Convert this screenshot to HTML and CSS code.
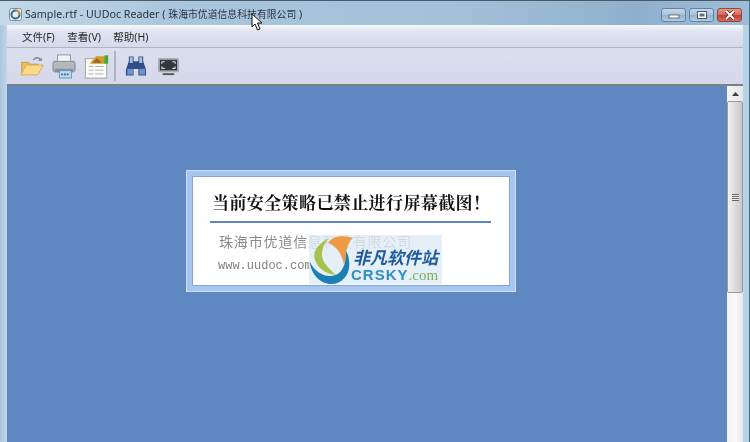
FILE: index.html
```html
<!DOCTYPE html>
<html lang="zh-CN">

<head>
    <meta charset="UTF-8">
    <title>Sample.rtf - UUDoc Reader</title>
    <link rel="stylesheet" href="styles.css">
</head>

<body>
    <div class="window">
        <header class="titlebar">
            <svg class="app-icon" width="13" height="13" viewBox="0 0 13 13">
                <rect x="0.5" y="0.5" width="12" height="12" rx="2" fill="#e8eef2" stroke="#7d8d99" />
                <circle cx="6.5" cy="6.5" r="4" fill="none" stroke="#2f6f8f" stroke-width="2" />
                <path d="M6.5 2.5a4 4 0 0 1 4 4" fill="none" stroke="#d9913a" stroke-width="1.6" />
            </svg>
            <span class="title">Sample.rtf - UUDoc Reader ( <span class="title-cn">珠海市优道信息科技有限公司</span> )</span>
            <div class="caption-buttons">
                <div class="caption-btn">
                    <svg width="12" height="8" viewBox="0 0 12 8">
                        <rect x="1" y="4" width="10" height="3" fill="#fff" stroke="#46586e" stroke-width="0.8" />
                    </svg>
                </div>
                <div class="caption-btn">
                    <svg width="12" height="10" viewBox="0 0 12 10">
                        <rect x="1.5" y="1.5" width="9" height="7" fill="#fff" stroke="#46586e" />
                        <rect x="3.5" y="3.5" width="5" height="3" fill="#5d7390" />
                    </svg>
                </div>
                <div class="caption-btn close">
                    <svg width="14" height="10" viewBox="0 0 14 10">
                        <path d="M3 1l8 8M11 1l-8 8" stroke="#5c2118" stroke-width="3.4" />
                        <path d="M3 1l8 8M11 1l-8 8" stroke="#fff" stroke-width="2" />
                    </svg>
                </div>
            </div>
        </header>

        <div class="client">
            <nav class="menubar">
                <span class="menu-item">文件(F)</span>
                <span class="menu-item">查看(V)</span>
                <span class="menu-item">帮助(H)</span>
            </nav>

            <div class="toolbar">
                <!-- open -->
                <svg class="tool" width="25" height="24" viewBox="0 0 28 26">
                    <path d="M3 22V9h8l2 2h8v3H9z" fill="#e9bf5c" stroke="#c69a3e" />
                    <path d="M2 23L8 12h19l-6 11z" fill="#fbd98a" stroke="#d9a94a" />
                    <path d="M16 6c3-3 6-3 8 0" fill="none" stroke="#7d8a96" stroke-width="1.6" />
                    <path d="M25.500 3.500v4h-4z" fill="#7d8a96" />
                </svg>
                <!-- print -->
                <svg class="tool" width="24" height="26" viewBox="0 0 26 28">
                    <rect x="6" y="2" width="14" height="9" fill="#f2f2f2" stroke="#8d9398" />
                    <rect x="1" y="9" width="24" height="11" rx="2" fill="#b3b8bd" stroke="#80868c" />
                    <rect x="3" y="17" width="20" height="4" fill="#8b9197" />
                    <rect x="8" y="19" width="13" height="8" fill="#bcdcf2" stroke="#5f94bd" />
                    <path d="M10 23h9" stroke="#34688f" stroke-width="2" stroke-dasharray="2 1" />
                </svg>
                <!-- properties -->
                <svg class="tool tool-props" width="26" height="27" viewBox="0 0 28 28">
                    <rect x="1.500" y="5.500" width="23" height="21" fill="#fbfbf7" stroke="#9aa0a0" />
                    <path d="M5 14h5M12 14h9M5 18h5M12 18h9M5 22h5M12 22h9" stroke="#a7adb0" />
                    <path d="M6 11l7-8h9l1 8z" fill="#d69a2d" />
                    <path d="M9 10l5-5 5 5" fill="#8a6a25" />
                    <rect x="22" y="2" width="4" height="9" fill="#3faa3a" />
                </svg>
                <div class="tool-sep"></div>
                <!-- find -->
                <svg class="tool tool-find" width="24" height="24" viewBox="0 0 25 24">
                    <path d="M5 2h5v5h5V2h5v5l3 9v6h-8v-7h-5v7H2v-6l3-9z" fill="#2e4f86" />
                    <path d="M6 3h3v6H6zM16 3h3v6h-3z" fill="#a9c2e2" />
                    <rect x="3.500" y="15" width="6" height="6" fill="#6f93c6" />
                    <rect x="16" y="15" width="6" height="6" fill="#6f93c6" />
                </svg>
                <!-- full screen -->
                <svg class="tool" width="23" height="21" viewBox="0 0 24 22">
                    <rect x="1" y="2" width="22" height="15" rx="1.500" fill="#a9adb1" />
                    <rect x="3" y="4" width="18" height="11" fill="#33383e" />
                    <path d="M5 6h3M5 6v2M19 6h-3M19 6v2M5 13h3M5 13v-2M19 13h-3M19 13v-2" stroke="#d8dde2" stroke-width="1.200" fill="none" />
                    <rect x="6" y="18" width="12" height="2" fill="#55595e" />
                </svg>
            </div>

            <div class="doc-area">
                <main class="doc-view">
                    <div class="notice">
                        <div class="notice-inner">
                            <h1 class="notice-title">当前安全策略已禁止进行屏幕截图！</h1>
                            <p class="company">珠海市优道信息科技有限公司</p>
                            <p class="site">www.uudoc.com</p>
                            <div class="watermark">
                                <svg class="watermark-logo" width="56" height="49" viewBox="0 0 56 49">
                                    <path d="M1 27C2 40 12 49 22 49C34 49 42 38 40 26C40 20 37 15 34 12C37 20 38 28 32 36C25 45 8 42 1 27z" fill="#1b7fb4" />
                                    <path d="M20 3C8 9 3 18 6 25C9 34 18 39 27 40C19 33 12 26 13 18C14 11 16 7 20 3z" fill="#a6c24a" />
                                    <path d="M44 3C36 0 24 0 19 8C26 10 33 18 35 30C38 20 36 10 44 3z" fill="#ee9a45" />
                                </svg>
                                <div class="watermark-text">
                                    <span class="watermark-cn">非凡软件站</span>
                                    <span class="watermark-en">CRSKY<small>.com</small></span>
                                </div>
                            </div>
                        </div>
                    </div>
                </main>
                <aside class="scrollbar">
                    <div class="scroll-btn">
                        <svg width="7" height="4" viewBox="0 0 7 4"><path d="M0 4l3.500-4L7 4z" fill="#3b3f45" /></svg>
                    </div>
                    <div class="scroll-thumb"><span class="grip"></span></div>
                    <div class="scroll-track"></div>
                </aside>
            </div>
        </div>
    </div>

    <svg class="cursor" width="13" height="18" viewBox="0 0 13 18">
        <path d="M1 1v13l3-3 2.500 6 2.500-1-2.500-6H11z" fill="#fff" stroke="#111" stroke-width="1" />
    </svg>
</body>

</html>
```

FILE: styles.css
```css
* {
    box-sizing: border-box;
    padding: 0;
    margin: 0;
}

html,
body {
    width: 750px;
    height: 442px;
    overflow: hidden;
}

body {
    position: relative;
    font-family: "Noto Sans", "Noto Sans CJK SC", sans-serif;
    background: #9fbcd6;
}

.window {
    display: flex;
    flex-direction: column;
    height: 442px;
    padding: 0 6px 0 7px;
    border-top: 1px solid #4a5a66;
    border-right: 1px solid #3f6f8c;
    background: linear-gradient(90deg, #a9c6de 0, #c2d6e8 7px, #c2d6e8 98%, #b5cfe4 100%);
    filter: blur(0.35px);
}

.titlebar {
    display: flex;
    align-items: center;
    height: 24px;
    margin: 0 -6px 0 -7px;
    padding: 2px 7px 0 9px;
    background: linear-gradient(90deg, #c3d8e8 0, #a9c5dc 25%, #a5c1d9 60%, #8fb0cd 85%, #9fbdd6 100%);
}

.app-icon {
    flex: none;
}

.title {
    margin-left: 3px;
    font-size: 10.7px;
    color: #2c3440;
    white-space: nowrap;
}

.title-cn {
    font-size: 9.85px;
}

.caption-buttons {
    display: flex;
    gap: 3px;
    margin-left: auto;
    margin-top: 1px;
}

.caption-btn {
    display: flex;
    align-items: center;
    justify-content: center;
    width: 25px;
    height: 14px;
    border: 1px solid #66829e;
    border-radius: 3px;
    background: linear-gradient(#c3d7e8 0, #a5c2da 50%, #90b0cc 51%, #b4cde2 100%);
}

.caption-btn.close {
    border-color: #8c4a40;
    background: linear-gradient(#e49a8c 0, #d3685a 50%, #bd4030 51%, #d86a58 100%);
}

.client {
    display: flex;
    flex-direction: column;
    flex: 1;
    min-height: 0;
}

.menubar {
    display: flex;
    align-items: center;
    gap: 12.5px;
    height: 23px;
    padding-left: 15px;
    border-bottom: 1px solid #b0b4c0;
    background: linear-gradient(#f7f8fc 0, #e0e3f0 30%, #d5d9ea 100%);
    font-size: 10.5px;
    color: #23272e;
}

.toolbar {
    display: flex;
    align-items: center;
    height: 38px;
    padding-left: 12px;
    border-bottom: 2px solid #7e8085;
    background: linear-gradient(#dcdfee 0, #d4d8e9 100%);
}

.tool {
    flex: none;
    margin-right: 8px;
}

.tool-props {
    margin-right: 4px;
}

.tool-find {
    margin-right: 9px;
}

.tool-sep {
    width: 2px;
    height: 30px;
    margin-right: 8px;
    background: #b0b3bd;
}

.doc-area {
    display: flex;
    flex: 1;
    min-height: 0;
}

.doc-view {
    flex: 1;
    padding: 84px 0 0 179px;
    background: #5f88c2;
}

.notice {
    width: 330px;
    height: 122px;
    padding: 5px;
    border: 1px solid #cfe0f6;
    background: #a7c6ef;
}

.notice-inner {
    position: relative;
    height: 110px;
    padding: 12px 18px 0 17px;
    border: 1px solid #7ea6da;
    background: #fff;
    font-family: "Noto Sans CJK SC", sans-serif;
}

.notice-title {
    height: 34px;
    padding-left: 2px;
    border-bottom: 2px solid #5a86c2;
    font-family: "Noto Serif CJK SC", "Noto Sans CJK SC", serif;
    font-size: 17px;
    line-height: 26px;
    font-weight: 700;
    letter-spacing: 0.4px;
    color: #111;
    white-space: nowrap;
}

.company {
    margin: 10px 0 0 9px;
    font-size: 14px;
    line-height: 16px;
    letter-spacing: 0.85px;
    color: #8a8a8a;
    white-space: nowrap;
}

.site {
    margin: 7px 0 0 8px;
    font-family: "Liberation Mono", monospace;
    font-size: 12px;
    line-height: 20px;
    color: #808080;
}

.watermark {
    position: absolute;
    left: 116px;
    top: 58px;
    display: flex;
    width: 133px;
    height: 49px;
    background: rgba(222, 236, 246, 0.82);
}

.watermark-logo {
    flex: none;
}

.watermark-text {
    display: flex;
    flex-direction: column;
    margin-left: -12px;
    padding-top: 13px;
    white-space: nowrap;
}

.watermark-cn {
    font-size: 17px;
    line-height: 17px;
    font-weight: 700;
    font-style: italic;
    color: #1f5a9c;
}

.watermark-en {
    margin: 3px 0 0 -2px;
    font-family: "Liberation Sans", sans-serif;
    font-size: 15px;
    line-height: 14px;
    font-weight: 700;
    letter-spacing: 1px;
    color: #2f8fc4;
}

.watermark-en small {
    font-family: "Liberation Serif", serif;
    font-size: 15px;
    font-weight: 400;
    letter-spacing: 0;
    color: #7fae5a;
}

.scrollbar {
    display: flex;
    flex-direction: column;
    flex: none;
    width: 16px;
    background: linear-gradient(90deg, #f0f0f0, #fafafa 50%, #e8e8e8);
}

.scroll-btn {
    display: flex;
    align-items: center;
    justify-content: center;
    height: 15px;
    background: linear-gradient(90deg, #f4f4f4, #e6e6e6);
}

.scroll-thumb {
    display: flex;
    align-items: center;
    justify-content: center;
    height: 192px;
    border: 1px solid #9a9a9a;
    border-radius: 2px;
    background: linear-gradient(90deg, #f2f2f2, #dcdcdc 50%, #c9c9c9);
}

.grip {
    width: 7px;
    height: 7px;
    background: repeating-linear-gradient(#666 0 1px, #eee 1px 2px);
}

.scroll-track {
    flex: 1;
}

.cursor {
    position: absolute;
    left: 251px;
    top: 13px;
}
```
